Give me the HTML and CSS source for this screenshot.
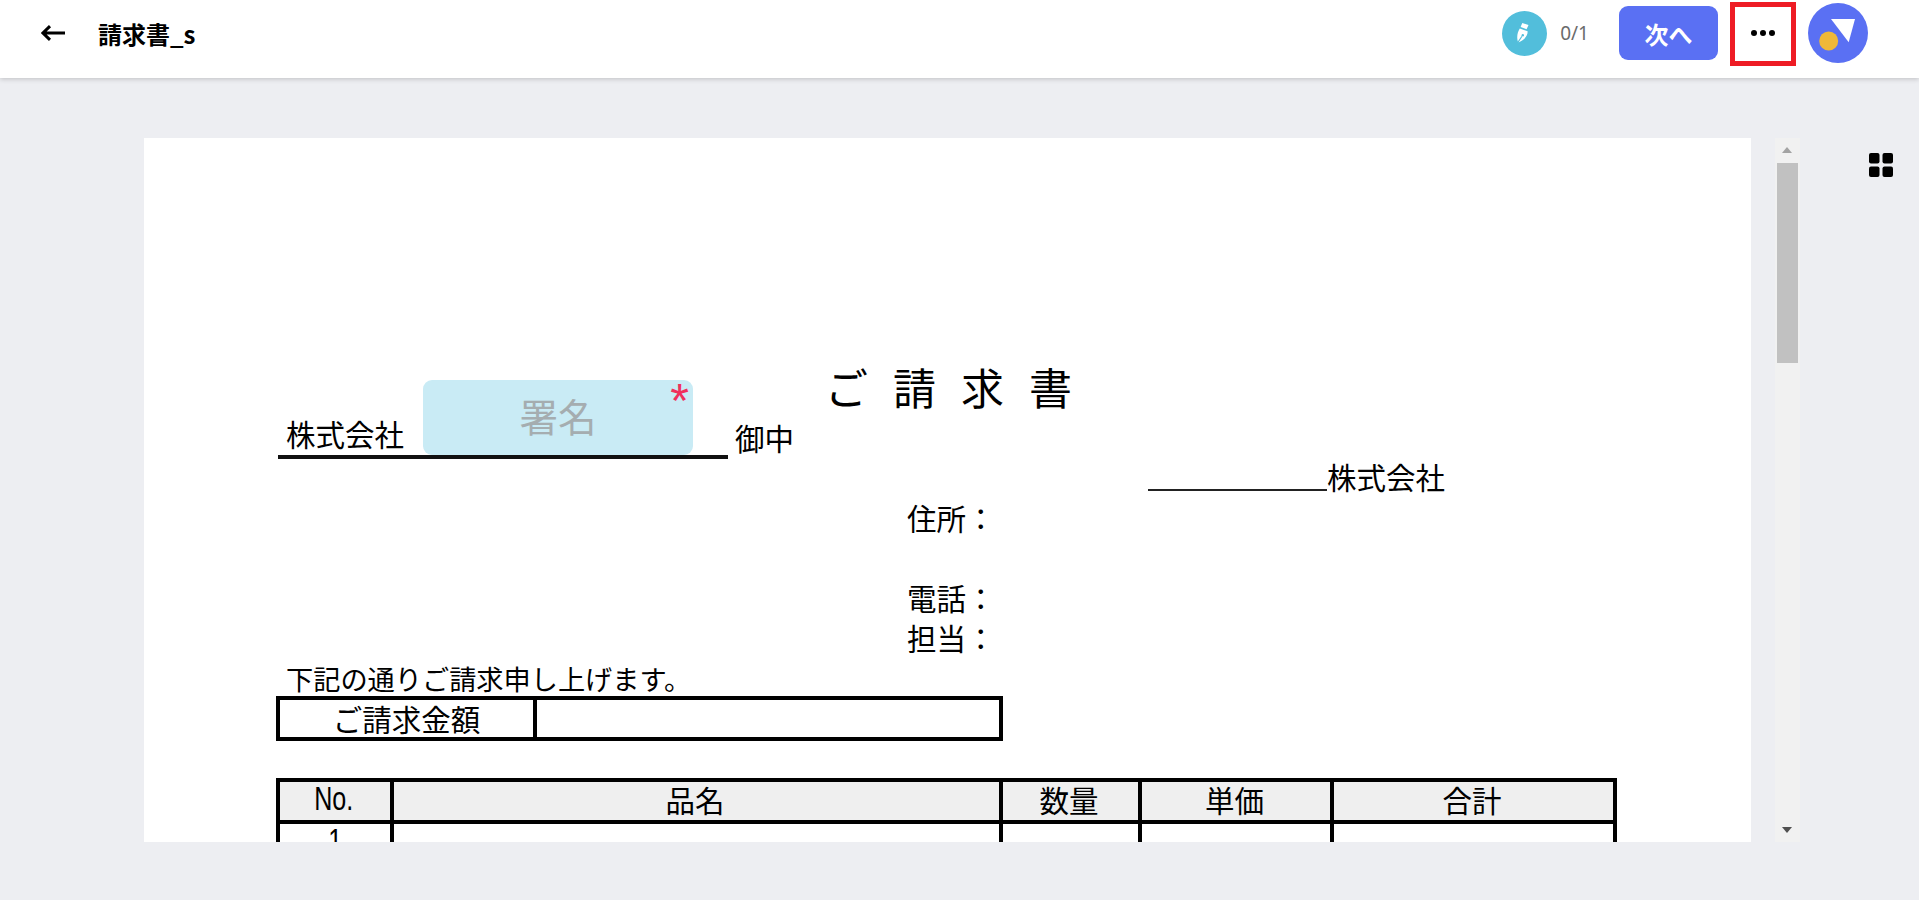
FILE: index.html
```html
<!DOCTYPE html>
<html lang="ja">
<head>
<meta charset="utf-8">
<title>請求書_s</title>
<link rel="stylesheet" href="styles.css">
</head>
<body>
<header class="topbar">
  <svg class="back" viewBox="0 0 24 16" width="24" height="16"><path d="M24 8H2M9 1.200 2 8l7 6.800" fill="none" stroke="#000" stroke-width="3"/></svg>
  <div class="doc-name">請求書_s</div>
  <div class="spacer"></div>
  <svg class="pen" viewBox="0 0 45 45" width="45" height="45">
    <circle cx="22.500" cy="22.500" r="22.500" fill="#52bedb"/>
    <path d="M20.300 12 26.500 14 24.600 18.200 18.600 16Z" fill="#fff"/>
    <path d="M17.800 17.600 25.600 20.200C26 24.500 22.500 29 16.500 31.500L20.300 25.800 19.500 25 15.800 30.500C14.500 26 15.500 21 17.800 17.600Z" fill="#fff"/>
    <circle cx="20.800" cy="24.300" r="1.200" fill="#52bedb"/>
  </svg>
  <div class="count">0/1</div>
  <button class="next">次へ</button>
  <div class="more"><span class="dot"></span><span class="dot"></span><span class="dot"></span></div>
  <svg class="avatar" viewBox="0 0 60 60" width="60" height="60">
    <circle cx="30" cy="30" r="30" fill="#5a70f3"/>
    <path d="M23 16h24l-6.300 23.300z" fill="#fff"/>
    <circle cx="20.700" cy="38" r="9.500" fill="#f0b838"/>
  </svg>
</header>
<main class="workspace">
  <section class="sheet">
    <div class="title">ご請求書</div>
    <div class="to-row">
      <div class="to-line">
        <span class="to-name">株式会社</span>
        <div class="field"><span class="field-label">署名</span><span class="req">*</span></div>
      </div>
      <span class="to-suffix">御中</span>
    </div>
    <div class="from-row"><span class="blank"></span><span class="from-name">株式会社</span></div>
    <div class="contact">
      <div class="contact-row">住所：</div>
      <div class="contact-row"></div>
      <div class="contact-row">電話：</div>
      <div class="contact-row">担当：</div>
    </div>
    <div class="lead">下記の通りご請求申し上げます。</div>
    <div class="amount">
      <div class="amount-label">ご請求金額</div>
      <div class="amount-value"></div>
    </div>
    <table class="items">
      <colgroup><col class="c-no"><col class="c-name"><col class="c-qty"><col class="c-unit"><col class="c-sum"></colgroup>
      <thead>
        <tr><th><span class="narrow">No.</span></th><th>品名</th><th>数量</th><th>単価</th><th>合計</th></tr>
      </thead>
      <tbody>
        <tr><td><span class="narrow">1</span></td><td></td><td></td><td></td><td></td></tr>
      </tbody>
    </table>
  </section>
  <div class="scroll">
    <div class="arrow up"></div>
    <div class="thumb"></div>
    <div class="track"></div>
    <div class="arrow down"></div>
  </div>
  <svg class="grid-icon" viewBox="0 0 24 24" width="24" height="24" fill="#000">
    <rect x="0" y="0" width="10.500" height="10.500" rx="2"/><rect x="13.500" y="0" width="10.500" height="10.500" rx="2"/>
    <rect x="0" y="13.500" width="10.500" height="10.500" rx="2"/><rect x="13.500" y="13.500" width="10.500" height="10.500" rx="2"/>
  </svg>
</main>
</body>
</html>
```
FILE: styles.css
```css
* { box-sizing: border-box; }
html, body { margin: 0; height: 900px; overflow: hidden; }
body { background: #edeef2; font-family: "Noto Sans CJK JP", "Noto Sans", sans-serif; color: #000; }

.topbar { height: 78px; background: #fff; display: flex; align-items: center; padding: 0 51px 12px 41px; box-shadow: 0 1px 5px rgba(0,0,0,.2); position: relative; }
.back { flex: none; }
.doc-name { margin: 1px 0 0 33px; font-size: 24px; font-weight: 700; line-height: 30px; }
.spacer { flex: 1; }
.count { margin-left: 13px; font-family: "Noto Sans", sans-serif; font-size: 19px; color: #6b6b6b; line-height: 24px; }
.next { margin-left: 30px; width: 99px; height: 54px; border: 0; border-radius: 9px; background: #5a70f3; color: #fff; font: 700 24px "Noto Sans CJK JP", sans-serif; }
.more { margin: 2px 0 0 12px; width: 66px; height: 64px; border: 5px solid #ee1c25; display: flex; align-items: center; justify-content: center; gap: 3px; padding-bottom: 2px; }
.dot { width: 6px; height: 6px; border-radius: 50%; background: #000; }
.avatar { margin-left: 12px; flex: none; }

.workspace { display: flex; align-items: flex-start; padding: 60px 0 0 144px; }
.sheet { width: 1607px; height: 704px; background: #fff; overflow: hidden; padding-top: 228px; flex: none; }

.title { margin: 0 0 -28px 681px; font-size: 43px; line-height: 40px; letter-spacing: 25px; white-space: nowrap; }
.to-row { display: flex; align-items: flex-end; margin-left: 134px; }
.to-line { position: relative; width: 450px; height: 81px; border-bottom: 4px solid #111; display: flex; align-items: flex-end; }
.to-name { margin: 0 0 4px 8px; font-size: 29.500px; line-height: 36px; }
.to-suffix { margin: 0 0 4px 7px; font-size: 29.500px; line-height: 36px; }
.field { position: absolute; left: 145px; top: 2px; width: 270px; height: 75px; background: #c9ebf5; border-radius: 9px; display: flex; justify-content: center; align-items: center; }
.field-label { font-size: 38.500px; line-height: 40px; color: #a5adb0; margin-bottom: 5px; }
.req { position: absolute; right: 4px; top: -3px; font-family: "Liberation Sans", sans-serif; font-size: 48px; line-height: 48px; color: #f0305c; }

.from-row { display: flex; align-items: flex-end; margin: 3px 0 0 1004px; }
.blank { width: 179px; height: 29px; border-bottom: 2px solid #222; }
.from-name { font-size: 29.500px; line-height: 29px; }

.contact { margin: 6px 0 0 763px; }
.contact-row { height: 40px; font-size: 29.500px; line-height: 40px; }

.lead { margin: 6px 0 0 142px; font-size: 27.200px; line-height: 30px; white-space: nowrap; }
.amount { margin: 3px 0 0 132px; width: 727px; height: 45px; border: 4px solid #000; display: flex; }
.amount-label { width: 257px; border-right: 4px solid #000; font-size: 29.500px; line-height: 36px; text-align: center; }
.amount-value { flex: 1; }

.items { margin: 37px 0 0 132px; width: 1337px; table-layout: fixed; border-collapse: collapse; }
.c-no { width: 114px; }
.c-name { width: 609px; }
.c-qty { width: 139px; }
.c-unit { width: 192px; }
.c-sum { width: 283px; }
.items th, .items td { border: 4px solid #000; padding: 0; text-align: center; font-size: 29.500px; font-weight: 400; line-height: 34px; }
.items th { background: #efefef; padding: 0 3px 4px 0; }
.narrow { display: inline-block; vertical-align: top; line-height: 34px; font-family: "Liberation Sans Narrow", "Liberation Sans", sans-serif; transform: scaleX(.76); font-size: 33px; }

.scroll { margin-left: 24px; width: 25px; height: 704px; background: #f1f1f1; display: flex; flex-direction: column; align-items: center; flex: none; }
.arrow { flex: none; width: 25px; height: 25px; position: relative; }
.arrow::after { content: ""; position: absolute; left: 7px; border-left: 5.500px solid transparent; border-right: 5.500px solid transparent; }
.arrow.up::after { top: 9px; border-bottom: 6px solid #a3a3a3; }
.arrow.down::after { top: 10px; border-top: 6px solid #505050; }
.thumb { flex: none; width: 21px; height: 200px; background: #c1c1c1; }
.track { flex: 1; }
.grid-icon { margin: 15px 0 0 69px; flex: none; }
```
